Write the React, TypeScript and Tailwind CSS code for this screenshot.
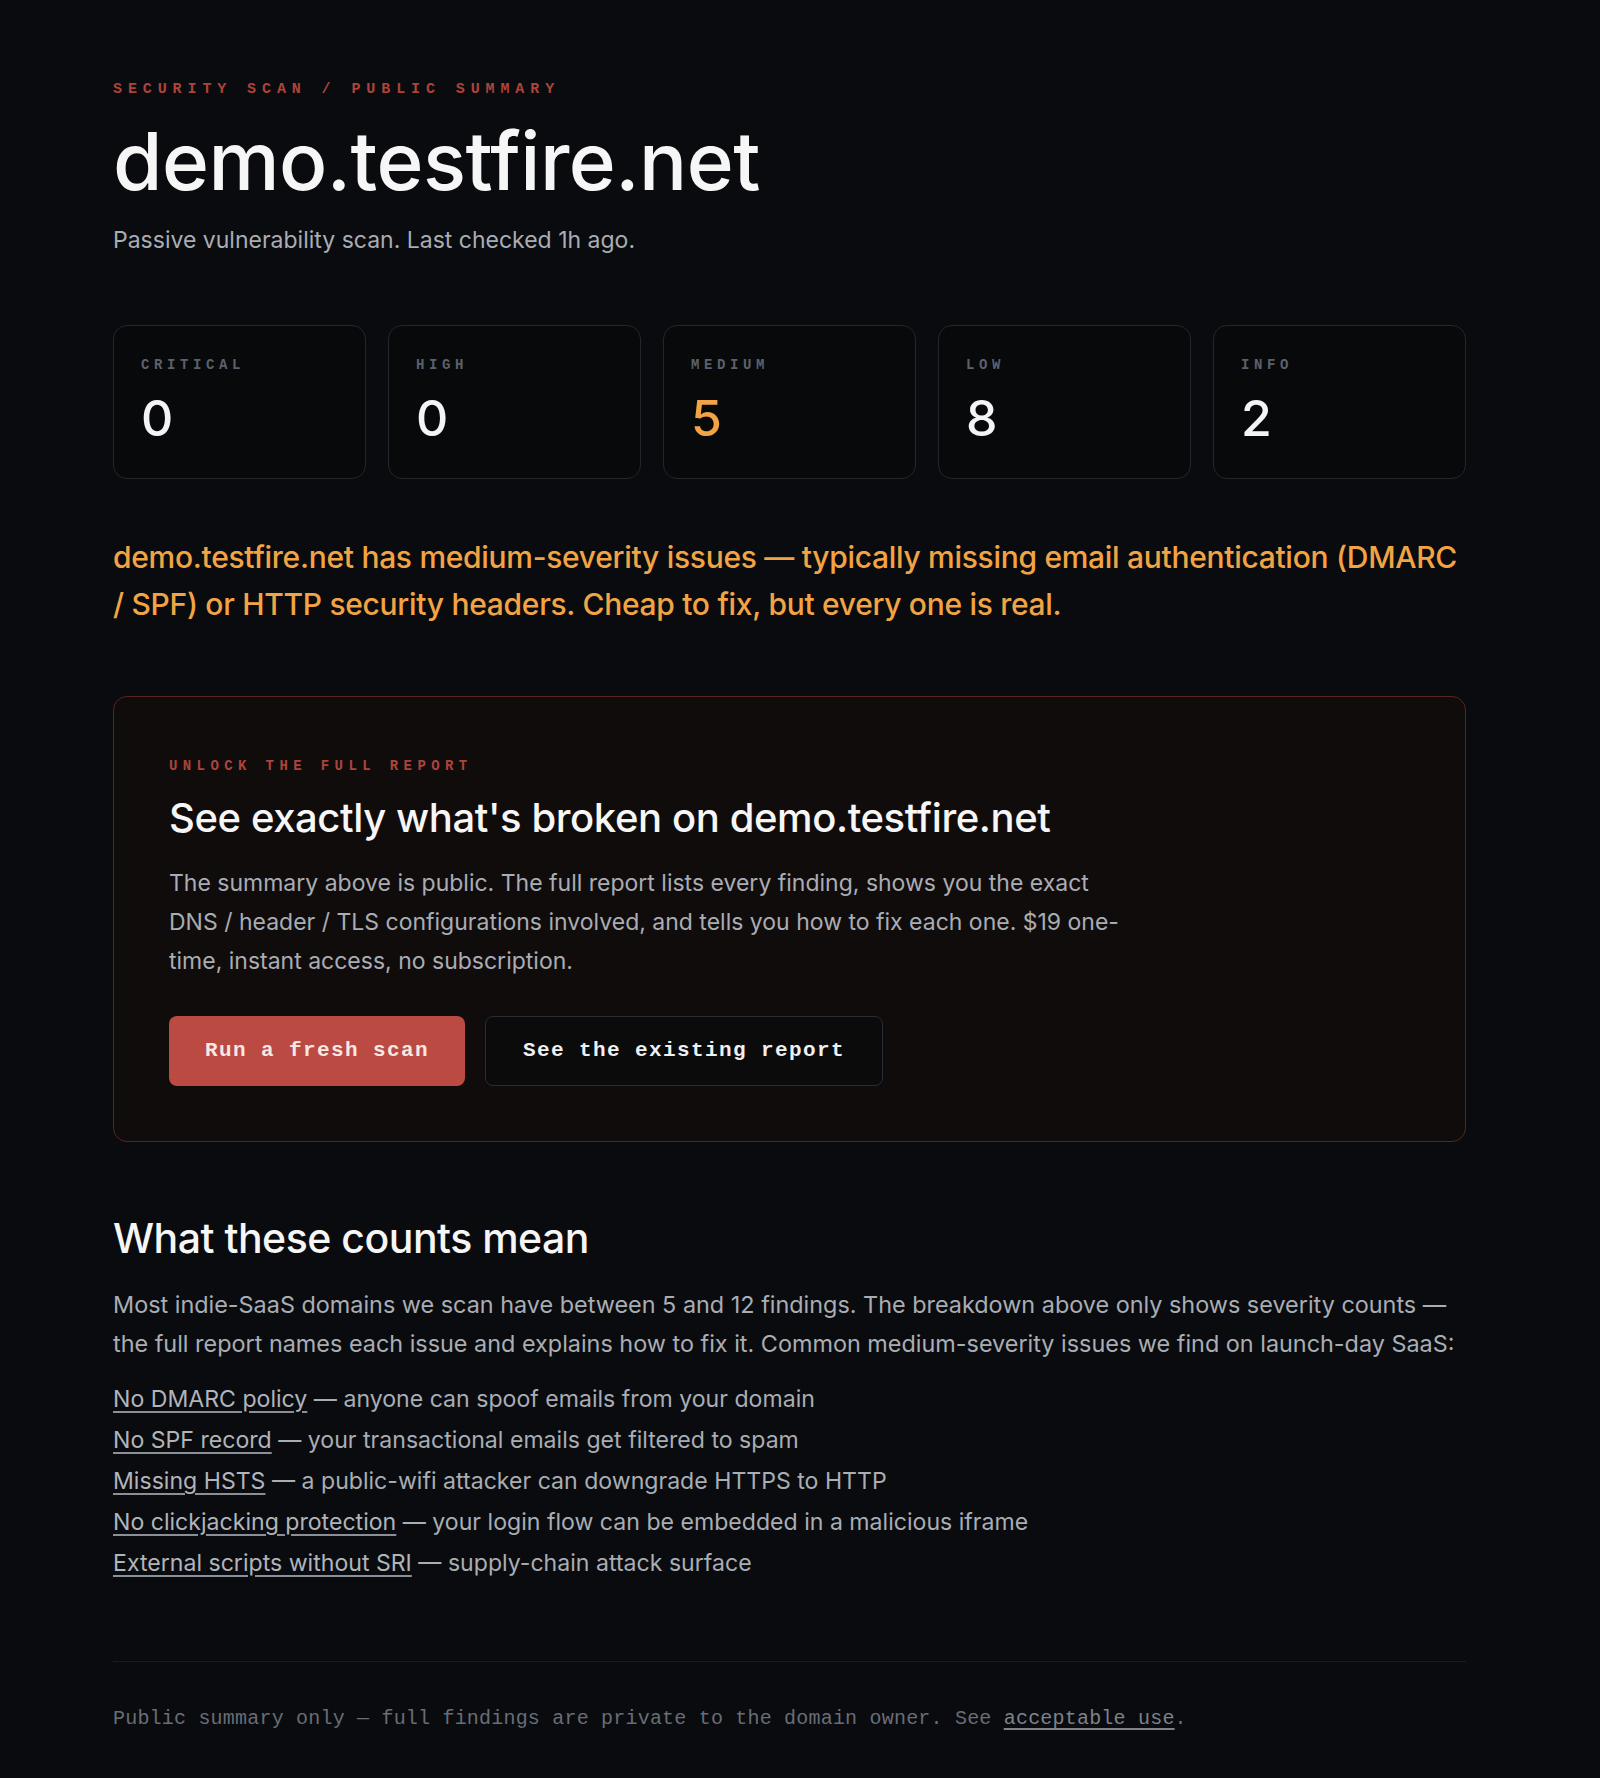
import React from 'react';

const sans = "font-['Inter','Noto_Sans',sans-serif]";
const mono = "font-['Liberation_Mono','DejaVu_Sans_Mono',monospace]";

const counts = [
  { label: 'CRITICAL', value: '0', tone: 'text-[#f4f4f5]' },
  { label: 'HIGH', value: '0', tone: 'text-[#f4f4f5]' },
  { label: 'MEDIUM', value: '5', tone: 'text-[#f2a444]' },
  { label: 'LOW', value: '8', tone: 'text-[#f4f4f5]' },
  { label: 'INFO', value: '2', tone: 'text-[#f4f4f5]' },
];

const findings = [
  { name: 'No DMARC policy', note: 'anyone can spoof emails from your domain' },
  { name: 'No SPF record', note: 'your transactional emails get filtered to spam' },
  { name: 'Missing HSTS', note: 'a public-wifi attacker can downgrade HTTPS to HTTP' },
  { name: 'No clickjacking protection', note: 'your login flow can be embedded in a malicious iframe' },
  { name: 'External scripts without SRI', note: 'supply-chain attack surface' },
];

const App = () => {
  return (
    <div className={`min-h-[1778px] bg-[#0a0b0e] ${sans}`}>
      <div className="ml-[113px] w-[1353px] pt-[80px] pb-[48px]">
        {/* header */}
        <p className={`${mono} text-[15px] leading-[20px] font-bold tracking-[5.9px] text-[#ad433a]`}>
          SECURITY SCAN / PUBLIC SUMMARY
        </p>
        <h1 className="mt-[21px] text-[80px] leading-none font-medium tracking-[-0.5px] text-[#f6f6f7]">
          demo.testfire.net
        </h1>
        <p className="mt-[25px] text-[23px] leading-[28px] text-[#a9adb4]">
          Passive vulnerability scan. Last checked 1h ago.
        </p>

        {/* severity counts */}
        <div className="mt-[71px] grid grid-cols-5 gap-[22px]">
          {counts.map((c) => (
            <div
              key={c.label}
              className="h-[154px] rounded-[14px] border border-[#23262c] bg-[#08090b] px-[27px] pt-[30px]"
            >
              <div className={`${mono} text-[14px] leading-[18px] font-bold tracking-[4.6px] text-[#5a616c]`}>
                {c.label}
              </div>
              <div className={`mt-[19px] text-[50px] leading-none font-medium ${c.tone}`}>{c.value}</div>
            </div>
          ))}
        </div>

        <p className="mt-[55px] text-[30px] leading-[47px] font-medium tracking-[-0.3px] text-[#f2a444]">
          demo.testfire.net has medium-severity issues — typically missing email authentication (DMARC / SPF) or
          HTTP security headers. Cheap to fix, but every one is real.
        </p>

        {/* unlock box */}
        <section className="mt-[68px] rounded-[14px] border border-[#582521] bg-[#110c0c] px-[55px] pt-[59px] pb-[55px]">
          <p className={`${mono} text-[14px] leading-[20px] font-bold tracking-[5.4px] text-[#ad433a]`}>
            UNLOCK THE FULL REPORT
          </p>
          <h2 className="mt-[20px] text-[40px] leading-[44px] font-medium tracking-[-0.4px] text-[#f6f6f7]">
            See exactly what's broken on demo.testfire.net
          </h2>
          <p className="mt-[24px] max-w-[970px] text-[23px] leading-[39px] text-[#a9adb4]">
            The summary above is public. The full report lists every finding, shows you the exact DNS / header / TLS
            configurations involved, and tells you how to fix each one. $19 one-time, instant access, no subscription.
          </p>
          <div className="mt-[35px] flex gap-[20px]">
            <button
              className={`${mono} h-[70px] w-[296px] rounded-[8px] bg-[#bb4a42] text-[21px] font-bold tracking-[1.4px] text-[#f6e9e4]`}
            >
              Run a fresh scan
            </button>
            <button
              className={`${mono} h-[70px] w-[398px] rounded-[8px] border border-[#2a2d33] bg-[#0c0b0c] text-[21px] font-bold tracking-[1.4px] text-[#eef0f3]`}
            >
              See the existing report
            </button>
          </div>
        </section>

        {/* explainer */}
        <h2 className="mt-[72px] text-[41px] leading-[48px] font-medium tracking-[-0.5px] text-[#f6f6f7]">
          What these counts mean
        </h2>
        <p className="mt-[23px] text-[23.4px] leading-[39px] text-[#a9adb4]">
          Most indie-SaaS domains we scan have between 5 and 12 findings. The breakdown above only shows severity
          counts — the full report names each issue and explains how to fix it. Common medium-severity issues we find
          on launch-day SaaS:
        </p>
        <ul className="mt-[16px] flex flex-col">
          {findings.map((f) => (
            <li key={f.name} className="text-[23.1px] leading-[41px] text-[#a9adb4]">
              <a href="#" className="underline decoration-[#8b9098] underline-offset-[4px] text-[#b0b4bb]">
                {f.name}
              </a>{' '}
              — {f.note}
            </li>
          ))}
        </ul>

        <hr className="mt-[77px] border-t border-[#1a1c20]" />
        <p className={`${mono} mt-[43px] text-[20px] leading-[28px] tracking-[0.2px] text-[#686d76]`}>
          Public summary only — full findings are private to the domain owner. See{' '}
          <a href="#" className="underline underline-offset-[4px] text-[#7d828b]">
            acceptable use
          </a>
          .
        </p>
      </div>
    </div>
  );
};

export default App;
